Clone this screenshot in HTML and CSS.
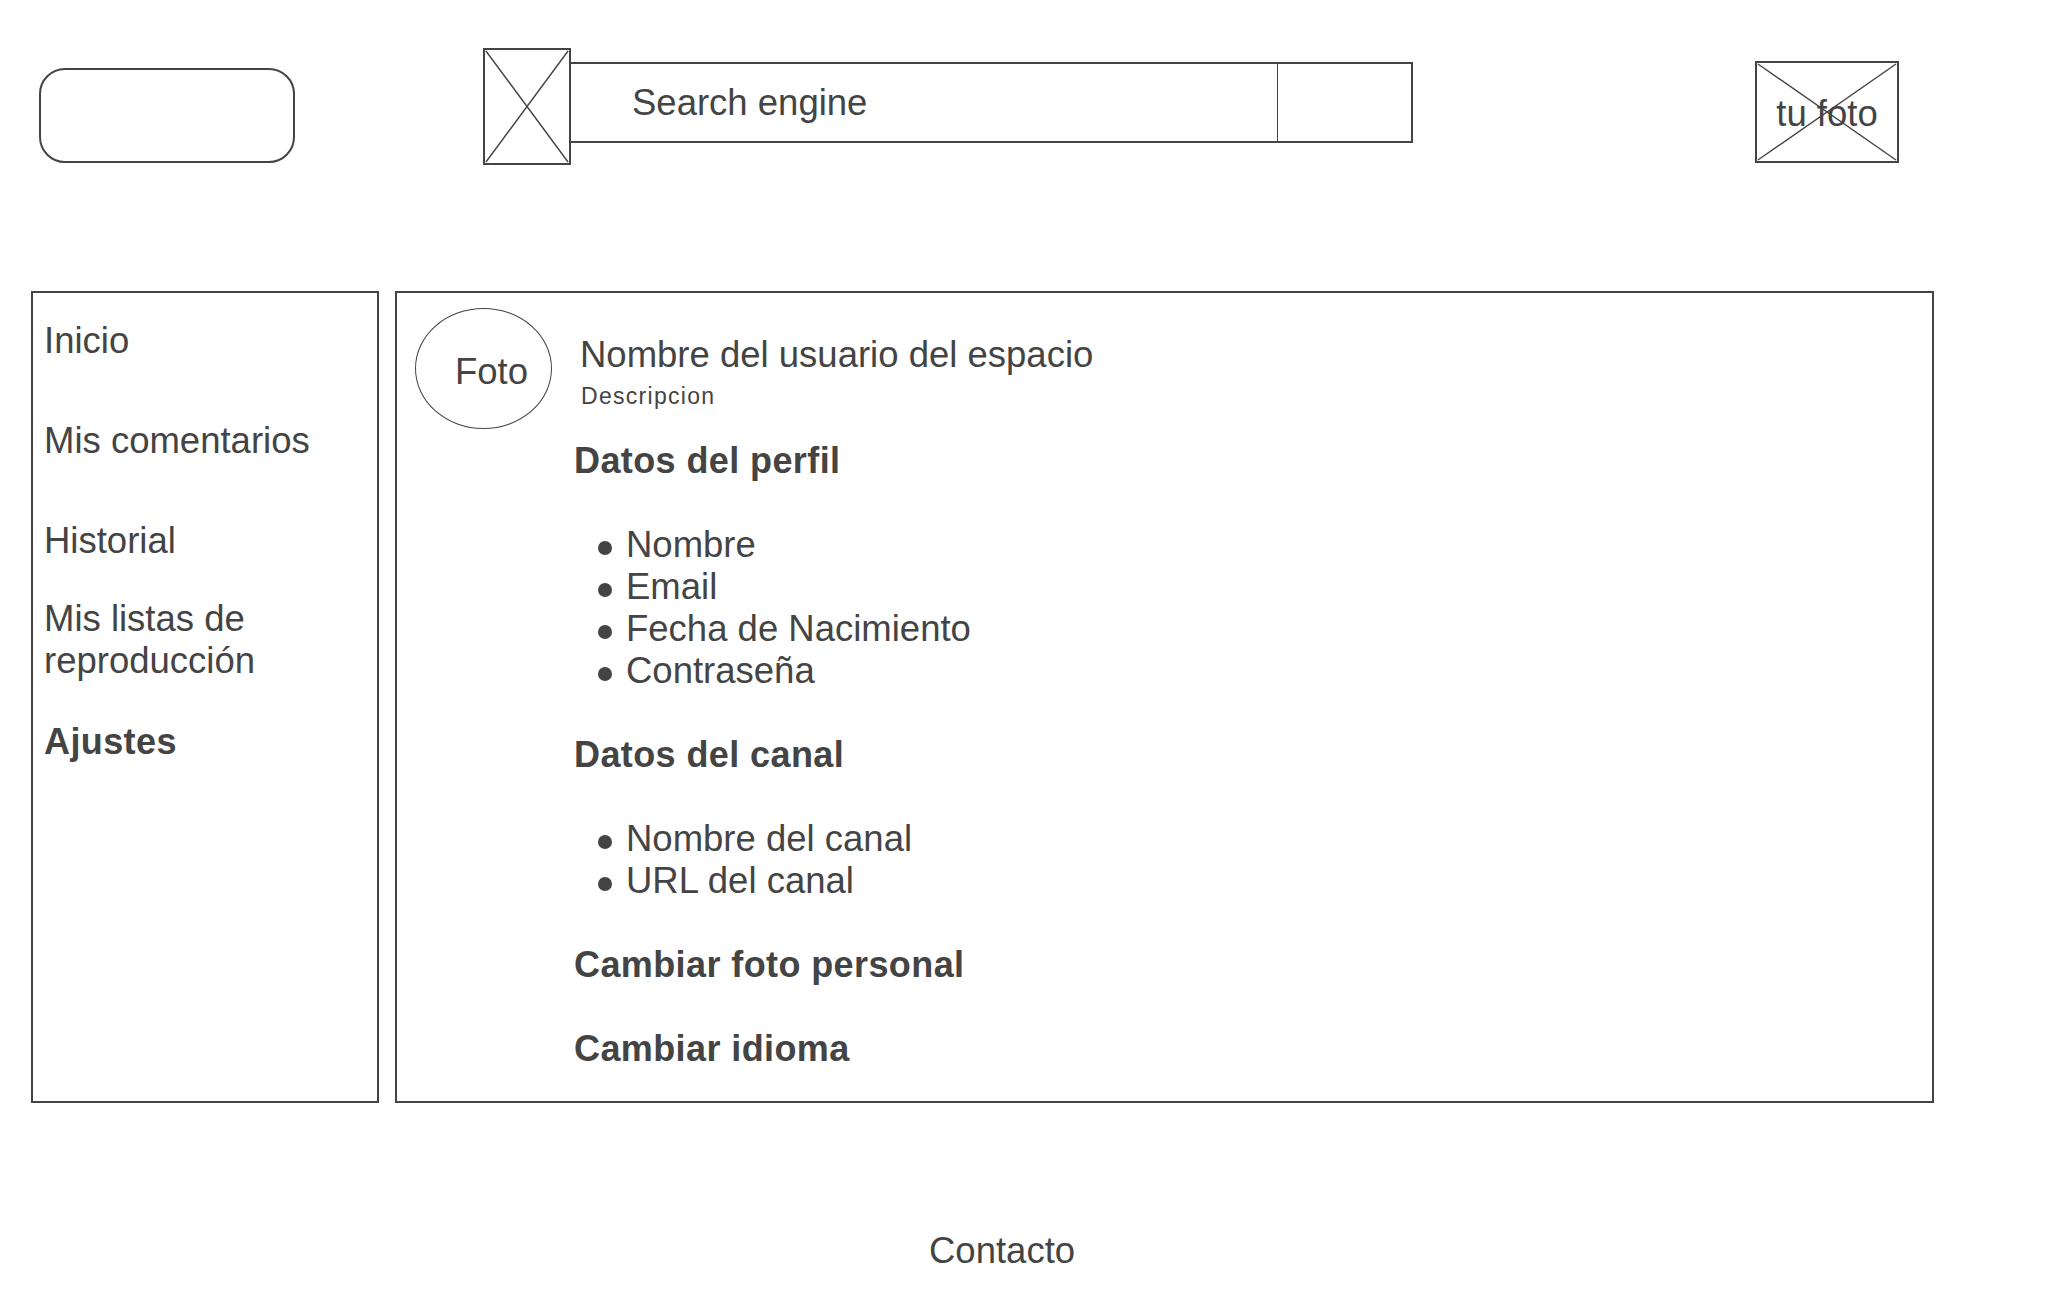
FILE: index.html
```html
<!DOCTYPE html>
<html lang="es">
<head>
<meta charset="utf-8">
<title>Ajustes</title>
<link rel="stylesheet" href="styles.css">
</head>
<body>
<header class="header">
  <div class="logo"></div>
  <div class="search-img">
    <svg class="x-lines" viewBox="0 0 88 117" preserveAspectRatio="none">
      <line x1="1" y1="1" x2="87" y2="116"/>
      <line x1="87" y1="1" x2="1" y2="116"/>
    </svg>
  </div>
  <div class="search">
    <div class="search-input">Search engine</div>
    <div class="search-btn"></div>
  </div>
  <div class="user-photo">
    <svg class="x-lines" viewBox="0 0 144 102" preserveAspectRatio="none">
      <line x1="1" y1="1" x2="143" y2="101"/>
      <line x1="143" y1="1" x2="1" y2="101"/>
    </svg>
    <span class="user-photo-label">tu foto</span>
  </div>
</header>

<div class="content">
  <nav class="sidebar">
    <div class="nav-item">Inicio</div>
    <div class="nav-item nav-wide">Mis comentarios</div>
    <div class="nav-item nav-wide">Historial</div>
    <div class="nav-item nav-narrow">Mis listas de reproducción</div>
    <div class="nav-item nav-last nav-active">Ajustes</div>
  </nav>

  <main class="main">
    <div class="head">
      <div class="avatar">Foto</div>
      <div class="head-text">
        <div class="name">Nombre del usuario del espacio</div>
        <div class="desc">Descripcion</div>
      </div>
    </div>

    <section class="settings">
      <h3 class="heading">Datos del perfil</h3>
      <ul class="list">
        <li>Nombre</li>
        <li>Email</li>
        <li>Fecha de Nacimiento</li>
        <li>Contraseña</li>
      </ul>
      <h3 class="heading">Datos del canal</h3>
      <ul class="list">
        <li>Nombre del canal</li>
        <li>URL del canal</li>
      </ul>
      <h3 class="heading">Cambiar foto personal</h3>
      <h3 class="heading">Cambiar idioma</h3>
    </section>
  </main>
</div>

<footer class="footer">Contacto</footer>
</body>
</html>
```

FILE: styles.css
```css
* {
  box-sizing: border-box;
}

body {
  margin: 0;
  background: #ffffff;
  color: #444444;
  font-family: "Liberation Sans", Arial, sans-serif;
  font-size: 36.5px;
}

/* ---------- header ---------- */
.header {
  display: flex;
  align-items: flex-start;
  height: 291px;
  padding-left: 39px;
}

.logo {
  width: 256px;
  height: 95px;
  margin-top: 68px;
  border: 2px solid #444444;
  border-radius: 26px;
}

.search-img {
  position: relative;
  width: 88px;
  height: 117px;
  margin-top: 48px;
  margin-left: 188px;
  border: 2px solid #444444;
}

.x-lines {
  position: absolute;
  inset: 0;
  width: 100%;
  height: 100%;
}

.x-lines line {
  stroke: #444444;
  stroke-width: 1.4;
  vector-effect: non-scaling-stroke;
}

.search {
  display: flex;
  width: 842px;
  height: 81px;
  margin-top: 62px;
  border: 2px solid #444444;
  border-left: none;
}

.search-input {
  flex: 1;
  display: flex;
  align-items: center;
  padding-left: 61px;
  line-height: 42px;
}

.search-btn {
  width: 134px;
  border-left: 1.5px solid #444444;
}

.user-photo {
  position: relative;
  width: 144px;
  height: 102px;
  margin-top: 61px;
  margin-left: 342px;
  border: 2px solid #444444;
  display: flex;
  align-items: center;
  justify-content: center;
  padding-top: 4px;
}

.user-photo-label {
  position: relative;
  line-height: 42px;
}

/* ---------- content ---------- */
.content {
  display: flex;
  gap: 16px;
  padding-left: 31px;
}

.sidebar {
  width: 348px;
  height: 812px;
  border: 2px solid #444444;
  padding: 26.5px 10px 0 11px;
}

.nav-item {
  line-height: 42px;
}

.nav-wide {
  margin-top: 58px;
}

.nav-narrow {
  margin-top: 36px;
}

.nav-last {
  margin-top: 39px;
}

.nav-active {
  font-weight: bold;
  font-size: 36px;
  letter-spacing: 0.4px;
}

.main {
  width: 1539px;
  height: 812px;
  border: 2px solid #444444;
  padding: 15px 0 0 18px;
}

.head {
  display: flex;
  align-items: flex-start;
}

.avatar {
  width: 137px;
  height: 121px;
  border: 1.5px solid #444444;
  border-radius: 50%;
  display: flex;
  align-items: center;
  justify-content: center;
  padding: 6px 0 0 16px;
  line-height: 42px;
}

.head-text {
  margin-left: 28px;
  margin-top: 25.6px;
}

.name {
  line-height: 41.85px;
}

.desc {
  margin-top: 5.5px;
  margin-left: 1px;
  font-size: 23px;
  letter-spacing: 1.3px;
  line-height: 30px;
}

.settings {
  margin-left: 159px;
  margin-top: 10.6px;
}

.heading {
  margin: 0 0 42px 0;
  font-size: 36px;
  font-weight: bold;
  letter-spacing: 0.4px;
  line-height: 42px;
}

.heading:last-child {
  margin-bottom: 0;
}

.list {
  list-style: none;
  margin: 0 0 42px 0;
  padding: 0;
}

.list li {
  display: flex;
  align-items: flex-start;
  line-height: 42px;
}

.list li::before {
  content: "";
  flex: none;
  width: 14px;
  height: 14px;
  margin: 17.5px 14px 0 24px;
  border-radius: 50%;
  background: #444444;
}

/* ---------- footer ---------- */
.footer {
  margin-top: 127px;
  padding-left: 929px;
  line-height: 42px;
}
```
